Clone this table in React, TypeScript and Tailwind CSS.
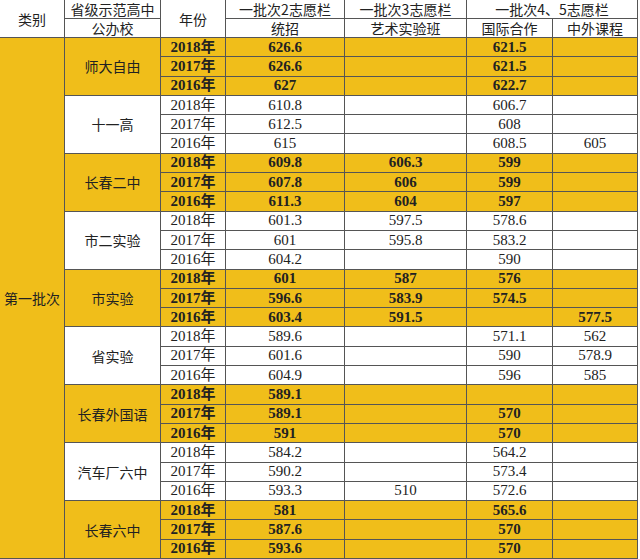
import React from "react";

type Row = { year: string; v: [string, string, string, string] };
type Group = { name: string; yellow: boolean; rows: Row[] };

const groups: Group[] = [
  { name: "师大自由", yellow: true, rows: [
    { year: "2018年", v: ["626.6", "", "621.5", ""] },
    { year: "2017年", v: ["626.6", "", "621.5", ""] },
    { year: "2016年", v: ["627", "", "622.7", ""] },
  ] },
  { name: "十一高", yellow: false, rows: [
    { year: "2018年", v: ["610.8", "", "606.7", ""] },
    { year: "2017年", v: ["612.5", "", "608", ""] },
    { year: "2016年", v: ["615", "", "608.5", "605"] },
  ] },
  { name: "长春二中", yellow: true, rows: [
    { year: "2018年", v: ["609.8", "606.3", "599", ""] },
    { year: "2017年", v: ["607.8", "606", "599", ""] },
    { year: "2016年", v: ["611.3", "604", "597", ""] },
  ] },
  { name: "市二实验", yellow: false, rows: [
    { year: "2018年", v: ["601.3", "597.5", "578.6", ""] },
    { year: "2017年", v: ["601", "595.8", "583.2", ""] },
    { year: "2016年", v: ["604.2", "", "590", ""] },
  ] },
  { name: "市实验", yellow: true, rows: [
    { year: "2018年", v: ["601", "587", "576", ""] },
    { year: "2017年", v: ["596.6", "583.9", "574.5", ""] },
    { year: "2016年", v: ["603.4", "591.5", "", "577.5"] },
  ] },
  { name: "省实验", yellow: false, rows: [
    { year: "2018年", v: ["589.6", "", "571.1", "562"] },
    { year: "2017年", v: ["601.6", "", "590", "578.9"] },
    { year: "2016年", v: ["604.9", "", "596", "585"] },
  ] },
  { name: "长春外国语", yellow: true, rows: [
    { year: "2018年", v: ["589.1", "", "", ""] },
    { year: "2017年", v: ["589.1", "", "570", ""] },
    { year: "2016年", v: ["591", "", "570", ""] },
  ] },
  { name: "汽车厂六中", yellow: false, rows: [
    { year: "2018年", v: ["584.2", "", "564.2", ""] },
    { year: "2017年", v: ["590.2", "", "573.4", ""] },
    { year: "2016年", v: ["593.3", "510", "572.6", ""] },
  ] },
  { name: "长春六中", yellow: true, rows: [
    { year: "2018年", v: ["581", "", "565.6", ""] },
    { year: "2017年", v: ["587.6", "", "570", ""] },
    { year: "2016年", v: ["593.6", "", "570", ""] },
  ] },
];

const sans = "font-['Noto_Sans_CJK_SC','Noto_Sans',sans-serif]";
const serif = "font-['Liberation_Serif','Noto_Sans_CJK_SC',serif]";
const cell = "flex items-center justify-center border-r border-b border-[#555] overflow-hidden whitespace-nowrap leading-none";
const valW = ["w-[119px]", "w-[122px]", "w-[86px]", "w-[85px]"];

export default function App() {
  return (
    <div className="w-[640px] h-[559px] bg-white text-[#222] flex flex-col">
      {/* header */}
      <div className={`flex h-[38px] text-[14px] ${sans}`}>
        <div className={`${cell} w-[65px] h-[38px]`}>类别</div>
        <div className="flex flex-col w-[96px]">
          <div className={`${cell} h-[19px]`}>省级示范高中</div>
          <div className={`${cell} h-[19px]`}>公办校</div>
        </div>
        <div className={`${cell} w-[65px] h-[38px]`}>年份</div>
        <div className="flex flex-col w-[412px]">
          <div className="flex h-[19px]">
            <div className={`${cell} w-[119px]`}>一批次2志愿栏</div>
            <div className={`${cell} w-[122px]`}>一批次3志愿栏</div>
            <div className={`${cell} w-[171px]`}>一批次4、5志愿栏</div>
          </div>
          <div className="flex h-[19px]">
            <div className={`${cell} w-[119px]`}>统招</div>
            <div className={`${cell} w-[122px]`}>艺术实验班</div>
            <div className={`${cell} w-[86px]`}>国际合作</div>
            <div className={`${cell} w-[85px]`}>中外课程</div>
          </div>
        </div>
      </div>
      {/* body */}
      <div className="flex flex-1">
        <div className={`${cell} ${sans} w-[65px] bg-[#f0be1a] text-[14px]`}>第一批次</div>
        <div className="flex flex-col w-[573px]">
          {groups.map((g) => (
            <div key={g.name} className={`flex flex-1 ${g.yellow ? "bg-[#f0be1a]" : "bg-white"}`}>
              <div className={`${cell} ${sans} w-[96px] text-[14px]`}>{g.name}</div>
              <div className="flex flex-col w-[477px]">
                {g.rows.map((r) => (
                  <div key={r.year} className={`flex flex-1 text-[15px] ${serif} ${g.yellow ? "font-bold" : "font-normal"}`}>
                    <div className={`${cell} w-[65px]`}>{r.year}</div>
                    {r.v.map((v, i) => (
                      <div key={i} className={`${cell} ${valW[i]}`}>{v}</div>
                    ))}
                  </div>
                ))}
              </div>
            </div>
          ))}
        </div>
      </div>
    </div>
  );
}
